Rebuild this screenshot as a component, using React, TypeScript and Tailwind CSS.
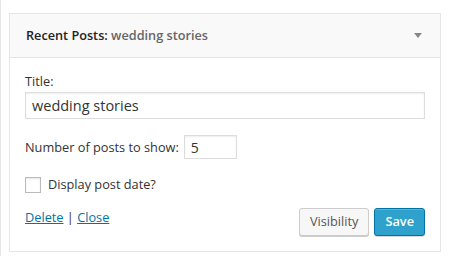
import React, { useState } from "react";

export default function App() {
  const [title, setTitle] = useState("wedding stories");
  const [count, setCount] = useState("5");
  const [showDate, setShowDate] = useState(false);

  return (
    <div
      className="w-[449px] h-[256px] bg-white border-l border-[#e5e5e5] pl-[8px] pt-[13px] text-[12.75px] text-[#333]"
      style={{ fontFamily: '"Open Sans", "Liberation Sans", sans-serif' }}
    >
      <div className="w-[432px] border border-[#e5e5e5] bg-white">
        <div className="h-[44px] bg-[#f9f9f9] border-b border-[#e5e5e5] flex items-center justify-between pl-[16px] pr-[18px]">
          <h3 className="font-semibold text-[12.7px] text-[#222]">
            Recent Posts:<span className="text-[#666]"> wedding stories</span>
          </h3>
          <span className="w-0 h-0 border-l-[4px] border-r-[4px] border-t-[5px] border-l-transparent border-r-transparent border-t-[#888]" />
        </div>

        <div className="px-[15px] pb-[15px]">
          <label className="block mt-[14px] leading-[18px]">Title:</label>
          <input
            className="block mt-[2px] w-full h-[27px] border border-[#ddd] px-[6px] text-[14.5px] text-[#333] shadow-[inset_0_1px_2px_rgba(0,0,0,0.07)] outline-none"
            value={title}
            onChange={(e) => setTitle(e.target.value)}
          />

          <div className="flex items-center mt-[16px]">
            <label className="leading-[18px]">Number of posts to show:</label>
            <input
              className="ml-[5px] w-[53px] h-[24px] border border-[#ddd] px-[6px] text-[14px] text-[#333] shadow-[inset_0_1px_2px_rgba(0,0,0,0.07)] outline-none"
              value={count}
              onChange={(e) => setCount(e.target.value)}
            />
          </div>

          <label className="flex items-center h-[16px] mt-[18px]">
            <input
              type="checkbox"
              checked={showDate}
              onChange={(e) => setShowDate(e.target.checked)}
              className="appearance-none w-[16px] h-[16px] border border-[#bbb] bg-white shadow-[inset_0_1px_2px_rgba(0,0,0,0.1)] m-0"
            />
            <span className="ml-[7px]">Display post date?</span>
          </label>

          <div className="flex items-start justify-between mt-[15px]">
            <div className="leading-[18px]">
              <a href="#" className="text-[#0074a2] underline">
                Delete
              </a>
              <span className="text-[#333]"> | </span>
              <a href="#" className="text-[#0074a2] underline">
                Close
              </a>
            </div>
            <div className="flex gap-[5px]">
              <button className="h-[28px] px-[10px] rounded-[3px] border border-[#ccc] bg-[#f7f7f7] text-[#555] shadow-[0_1px_0_#ccc]">
                Visibility
              </button>
              <button className="h-[28px] px-[10px] rounded-[3px] border border-[#0074a2] bg-[#2ea2cc] text-white font-semibold shadow-[inset_0_1px_0_rgba(120,200,230,0.5),0_1px_0_rgba(0,0,0,0.15)]">
                Save
              </button>
            </div>
          </div>
        </div>
      </div>
    </div>
  );
}
